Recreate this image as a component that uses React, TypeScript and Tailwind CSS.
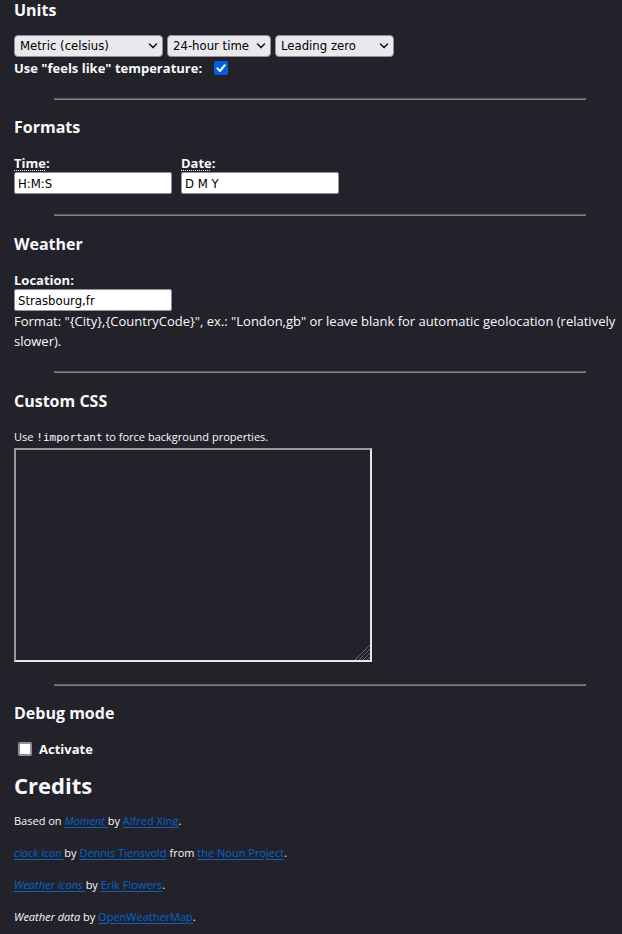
import type { ReactNode } from "react";

const controlFont =
  "font-['DejaVu_Sans_Condensed','DejaVu_Sans',sans-serif] [font-stretch:condensed] text-[13px] leading-5 text-black";

const field = `block h-[22px] w-[158px] rounded-[2px] border border-[#8f8f9d] bg-white px-[3px] ${controlFont}`;

function Heading({ children }: { children: ReactNode }) {
  return <h3 className="mb-4 text-[16px] leading-5 font-bold">{children}</h3>;
}

function Divider() {
  return (
    <hr className="mt-5 mr-9 mb-[17px] ml-10 h-[2px] border border-t-[#5f5f5f] border-r-[#808080] border-b-[#808080] border-l-[#5f5f5f]" />
  );
}

function Select({ label, value, width }: { label: string; value: string; width: string }) {
  return (
    <div className={`relative ${width}`}>
      <select
        aria-label={label}
        defaultValue={value}
        className={`block h-[22px] w-full appearance-none rounded-[4px] border border-[#8f8f9d] bg-[#e9e9ed] pl-[5px] ${controlFont}`}
      >
        <option>{value}</option>
      </select>
      <svg
        viewBox="0 0 10 6"
        className="pointer-events-none absolute top-2 right-[5px] h-[6px] w-[10px]"
        fill="none"
        stroke="#15141a"
        strokeWidth="1.5"
        strokeLinecap="round"
        strokeLinejoin="round"
      >
        <path d="M1.5 1 5 4.6 8.5 1" />
      </svg>
    </div>
  );
}

function Checkbox({ id, checked }: { id: string; checked?: boolean }) {
  return (
    <span className="relative block size-[14px]">
      <input
        id={id}
        type="checkbox"
        defaultChecked={checked}
        className="peer block size-[14px] appearance-none rounded-[2px] border-2 border-[#8f8f9d] bg-white checked:border-[#0060df] checked:bg-[#0060df]"
      />
      <svg
        viewBox="0 0 14 14"
        className="pointer-events-none absolute inset-0 hidden size-[14px] peer-checked:block"
        fill="none"
        stroke="white"
        strokeWidth="2"
        strokeLinecap="round"
        strokeLinejoin="round"
      >
        <path d="M3.4 7.4 6 10 10.8 4.2" />
      </svg>
    </span>
  );
}

function Link({ children }: { children: ReactNode }) {
  return (
    <a href="#" className="text-[#0663cc] underline underline-offset-2">
      {children}
    </a>
  );
}

export default function App() {
  return (
    <main className="min-h-screen bg-[#23222b] pl-[14px] font-['Open_Sans',sans-serif] text-[13px] leading-5 text-[#f9f9fa]">
      <section>
        <Heading>Units</Heading>
        <div className="-mt-px flex gap-1">
          <Select label="Temperature units" value="Metric (celsius)" width="w-[149px]" />
          <Select label="Time format" value="24-hour time" width="w-[104px]" />
          <Select label="Hour padding" value="Leading zero" width="w-[119px]" />
        </div>
        <div className="mt-px flex items-center gap-3 font-bold">
          <label htmlFor="feels">Use "feels like" temperature:</label>
          <Checkbox id="feels" checked />
        </div>
      </section>
      <Divider />
      <section>
        <Heading>Formats</Heading>
        <div className="flex gap-[9px]">
          <div>
            <label htmlFor="time" className="block h-[19px] font-bold">
              <span className="underline decoration-dotted decoration-1 underline-offset-2">Time</span>:
            </label>
            <input id="time" type="text" defaultValue="H:M:S" className={field} />
          </div>
          <div>
            <label htmlFor="date" className="block h-[19px] font-bold">
              <span className="underline decoration-dotted decoration-1 underline-offset-2">Date</span>:
            </label>
            <input id="date" type="text" defaultValue="D M Y" className={field} />
          </div>
        </div>
      </section>
      <Divider />
      <section className="pt-px">
        <Heading>Weather</Heading>
        <label htmlFor="location" className="block h-[19px] font-bold">
          Location:
        </label>
        <input id="location" type="text" defaultValue="Strasbourg,fr" className={field} />
        <p>
          {'Format: "{City},{CountryCode}", ex.: "London,gb" or leave blank for automatic geolocation (relatively slower).'}
        </p>
      </section>
      <Divider />
      <section className="pt-px pb-[2px]">
        <Heading>Custom CSS</Heading>
        <label htmlFor="css" className="block text-[11px] leading-5">
          Use <code className="font-['DejaVu_Sans_Mono',monospace] text-[11px]">!important</code> to force background
          properties.
        </label>
        <div className="relative w-[358px]">
          <textarea
            id="css"
            className="block h-[214px] w-full resize-none border-2 border-t-[#9a9a9a] border-r-[#e6e6e2] border-b-[#e6e6e2] border-l-[#9a9a9a] bg-transparent p-1 font-['DejaVu_Sans_Mono',monospace]"
          />
          <svg
            viewBox="0 0 15 15"
            className="pointer-events-none absolute right-[2px] bottom-[2px] size-[15px]"
            stroke="#85858b"
            strokeWidth="1"
            strokeDasharray="1.2 0.4"
          >
            <path d="M0 15 15 0M4 15 15 4M8 15 15 8M12 15 15 12" />
          </svg>
        </div>
      </section>
      <Divider />
      <section>
        <Heading>Debug mode</Heading>
        <div className="flex items-center gap-[7px] pl-1 font-bold">
          <Checkbox id="debug" />
          <label htmlFor="debug">Activate</label>
        </div>
      </section>
      <section className="text-[11px] leading-5">
        <h2 className="my-[10px] text-[22px] leading-8 font-bold">Credits</h2>
        <div className="flex flex-col gap-3">
          <p>
            Based on <Link><em>Moment </em></Link>by <Link>Alfred Xing</Link>.
          </p>
          <p>
            <Link><em>clock icon </em></Link>by <Link>Dennis Tiensvold</Link> from <Link>the Noun Project</Link>.
          </p>
          <p>
            <Link><em>Weather icons </em></Link>by <Link>Erik Flowers</Link>.
          </p>
          <p>
            <em>Weather data</em> by <Link>OpenWeatherMap</Link>.
          </p>
        </div>
      </section>
    </main>
  );
}
